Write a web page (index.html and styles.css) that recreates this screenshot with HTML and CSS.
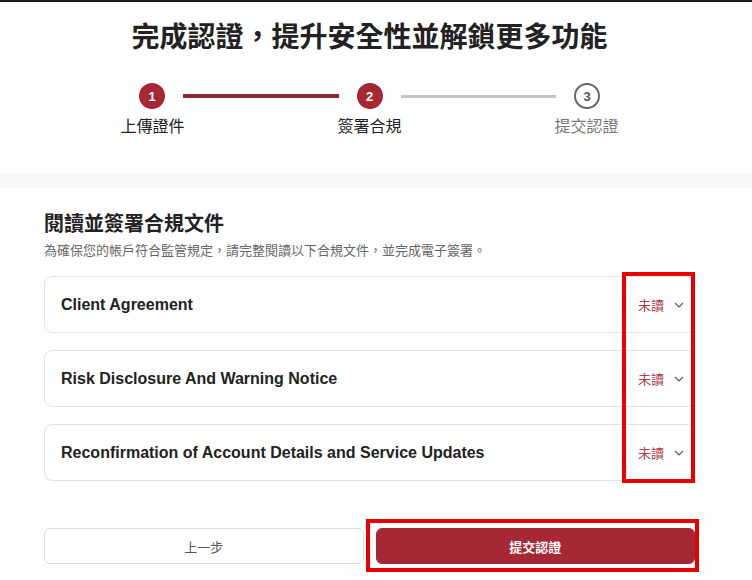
FILE: index.html
```html
<!DOCTYPE html>
<html lang="zh-Hant">
<head>
  <meta charset="UTF-8" />
  <meta name="viewport" content="width=device-width, initial-scale=1" />
  <title>完成認證</title>
  <link rel="stylesheet" href="styles.css">
</head>
<body>
  <div class="page">
    <header class="header">
      <h1>完成認證，提升安全性並解鎖更多功能</h1>

      <div class="steps">
        <div class="track">
          <span class="dot done">1</span>
          <span class="line done"></span>
          <span class="dot done">2</span>
          <span class="line"></span>
          <span class="dot">3</span>
        </div>
        <div class="labels">
          <span>上傳證件</span>
          <span>簽署合規</span>
          <span class="todo">提交認證</span>
        </div>
      </div>
    </header>

    <main class="content">
      <h2>閱讀並簽署合規文件</h2>
      <p class="hint">為確保您的帳戶符合監管規定，請完整閱讀以下合規文件，並完成電子簽署。</p>

      <div class="docs">
        <div class="doc">
          <span class="doc-title">Client Agreement</span>
          <span class="status">未讀</span>
          <svg class="chev" width="10" height="6" viewBox="0 0 10 6"><path d="M1 1l4 4 4-4" fill="none" stroke="#555" stroke-width="1.1"/></svg>
        </div>
        <div class="doc">
          <span class="doc-title">Risk Disclosure And Warning Notice</span>
          <span class="status">未讀</span>
          <svg class="chev" width="10" height="6" viewBox="0 0 10 6"><path d="M1 1l4 4 4-4" fill="none" stroke="#555" stroke-width="1.1"/></svg>
        </div>
        <div class="doc">
          <span class="doc-title">Reconfirmation of Account Details and Service Updates</span>
          <span class="status">未讀</span>
          <svg class="chev" width="10" height="6" viewBox="0 0 10 6"><path d="M1 1l4 4 4-4" fill="none" stroke="#555" stroke-width="1.1"/></svg>
        </div>
      </div>

      <div class="actions">
        <button class="btn">上一步</button>
        <button class="btn primary">提交認證</button>
      </div>
    </main>

    <!-- 標註框 -->
    <div class="mark mark-status"></div>
    <div class="mark mark-submit"></div>
  </div>
</body>
</html>
```

FILE: styles.css
```css
* {
  box-sizing: border-box;
}
body {
  margin: 0;
  background: #f7f8fa;
  font-family: "Liberation Sans", "Noto Sans CJK TC", sans-serif;
  color: #222;
}
.page {
  position: relative;
  border-top: 2px solid #1e1e1e;
  min-height: 578px;
}

/* 頂部 */
.header {
  background: #fff;
  padding: 16px 57px 36px 44px;
  margin-bottom: 15px;
}
h1 {
  margin: 0 0 25px;
  font-size: 28px;
  line-height: 40px;
  font-weight: 700;
  text-align: center;
  color: #222;
}
.track {
  display: flex;
  align-items: center;
  padding: 0 95px;
}
.dot {
  width: 26px;
  height: 26px;
  flex: none;
  border-radius: 50%;
  border: 2px solid #666;
  color: #555;
  font-size: 13px;
  font-weight: 700;
  display: flex;
  align-items: center;
  justify-content: center;
  background: #fff;
}
.dot.done {
  background: #a52834;
  border-color: #a52834;
  color: #fff;
}
.line {
  flex: 1;
  height: 3px;
  margin: 0 18px;
  background: #c3c6c9;
}
.line.done {
  height: 4px;
  background: #8e2630;
}
.labels {
  display: grid;
  grid-template-columns: repeat(3, 1fr);
  margin-top: 8px;
  font-size: 16px;
  line-height: 20px;
  text-align: center;
  color: #222;
}
.labels .todo {
  color: #777;
}

/* 內容 */
.content {
  background: #fff;
  padding: 22px 57px 30px 44px;
  min-height: 390px;
}
h2 {
  margin: 0;
  font-size: 20px;
  line-height: 28px;
  font-weight: 700;
}
.hint {
  margin: 3px 0 0;
  font-size: 13px;
  line-height: 20px;
  color: #666;
}
.docs {
  margin-top: 15px;
  display: flex;
  flex-direction: column;
  gap: 17px;
}
.doc {
  height: 57px;
  border: 1px solid #e3e3e3;
  border-radius: 8px;
  display: flex;
  align-items: center;
  padding: 0 10px 0 16px;
}
.doc-title {
  flex: 1;
  font-size: 16px;
  font-weight: 700;
  color: #222;
}
.status {
  font-size: 13px;
  color: #b03a48;
  margin-right: 10px;
}
.chev {
  margin-right: 0;
}
.actions {
  margin-top: 47px;
  display: flex;
  gap: 12px;
}
.btn {
  flex: 1;
  height: 36px;
  border: 1px solid #dcdcdc;
  border-radius: 6px;
  background: #fff;
  font-family: "Noto Sans CJK TC", sans-serif;
  font-size: 13px;
  color: #555;
  cursor: pointer;
}
.btn.primary {
  background: #a52834;
  border-color: #a52834;
  color: #fff;
  font-weight: 700;
}

/* 紅色標註框 */
.mark {
  position: absolute;
  border: 4px solid #e60000;
  pointer-events: none;
}
.mark-status {
  left: 622px;
  top: 270px;
  width: 73px;
  height: 211px;
}
.mark-submit {
  left: 366px;
  top: 517px;
  width: 333px;
  height: 53px;
}
```
